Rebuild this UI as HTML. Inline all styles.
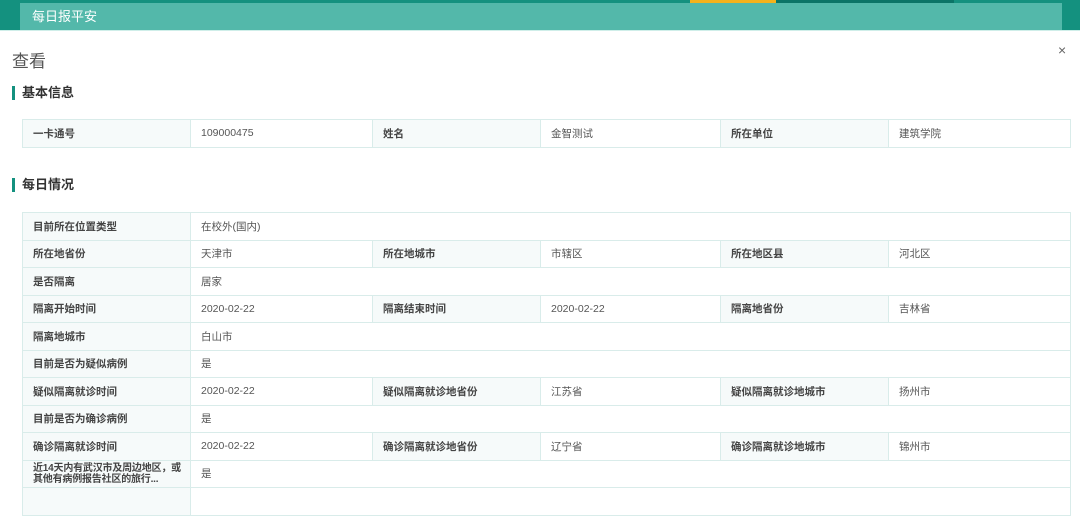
<!DOCTYPE html>
<html><head><meta charset="utf-8"><style>
*{margin:0;padding:0;box-sizing:border-box}
body{width:1080px;height:495px;overflow:hidden;background:#fff;font-family:"Liberation Sans","Noto Sans CJK SC",sans-serif;position:relative}
.top{position:absolute;left:0;top:0;width:1080px;height:30px;background:#14917f}
.inner{position:absolute;left:20px;top:3px;width:1042px;height:27px;background:#53b8aa;color:#fff;font-size:13px;line-height:27px;padding-left:12px}
.or{position:absolute;left:690px;top:0;width:86px;height:3px;background:#f5b21c}
.dk{position:absolute;left:776px;top:0;width:178px;height:3px;background:#0b7467}
.line{position:absolute;left:0;top:30px;width:1080px;height:1px;background:#cfeee9}
h1{position:absolute;left:12px;top:47px;font-size:17px;color:#555;font-weight:normal}
.x{position:absolute;left:1058px;top:42px;font-size:14px;color:#666}
h2{position:absolute;left:12px;font-size:13px;color:#333;font-weight:bold;border-left:3px solid #14917f;padding-left:7px;line-height:14px}
table{position:absolute;left:22px;width:1048px;border-collapse:collapse;font-size:10.5px;color:#555;table-layout:fixed}
td{border:1px solid #d9ecea;padding:0 10px;height:27.5px;white-space:nowrap;overflow:hidden}
td.l{background:#f6fafa;color:#444;font-weight:bold}
td.w{line-height:11px;padding:0 2px 0 10px;font-size:10px;letter-spacing:-0.2px}
</style></head><body>
<div class="top"><div class="inner">每日报平安</div><div class="or"></div><div class="dk"></div></div>
<div class="line"></div>
<h1>查看</h1><div class="x">×</div>
<h2 style="top:86px">基本信息</h2>
<table style="top:119px"><colgroup><col width="168"><col width="182"><col width="168"><col width="180"><col width="168"><col width="182"></colgroup>
<tr><td class="l">一卡通号</td><td>109000475</td><td class="l">姓名</td><td>金智测试</td><td class="l">所在单位</td><td>建筑学院</td></tr></table>
<h2 style="top:178px">每日情况</h2>
<table style="top:212px"><colgroup><col width="168"><col width="182"><col width="168"><col width="180"><col width="168"><col width="182"></colgroup>
<tr><td class="l">目前所在位置类型</td><td colspan="5">在校外(国内)</td></tr>
<tr><td class="l">所在地省份</td><td>天津市</td><td class="l">所在地城市</td><td>市辖区</td><td class="l">所在地区县</td><td>河北区</td></tr>
<tr><td class="l">是否隔离</td><td colspan="5">居家</td></tr>
<tr><td class="l">隔离开始时间</td><td>2020-02-22</td><td class="l">隔离结束时间</td><td>2020-02-22</td><td class="l">隔离地省份</td><td>吉林省</td></tr>
<tr><td class="l">隔离地城市</td><td colspan="5">白山市</td></tr>
<tr><td class="l">目前是否为疑似病例</td><td colspan="5">是</td></tr>
<tr><td class="l">疑似隔离就诊时间</td><td>2020-02-22</td><td class="l">疑似隔离就诊地省份</td><td>江苏省</td><td class="l">疑似隔离就诊地城市</td><td>扬州市</td></tr>
<tr><td class="l">目前是否为确诊病例</td><td colspan="5">是</td></tr>
<tr><td class="l">确诊隔离就诊时间</td><td>2020-02-22</td><td class="l">确诊隔离就诊地省份</td><td>辽宁省</td><td class="l">确诊隔离就诊地城市</td><td>锦州市</td></tr>
<tr><td class="l w">近14天内有武汉市及周边地区，或<br>其他有病例报告社区的旅行...</td><td colspan="5">是</td></tr>
<tr><td class="l"></td><td colspan="5"></td></tr>
</table>
</body></html>
